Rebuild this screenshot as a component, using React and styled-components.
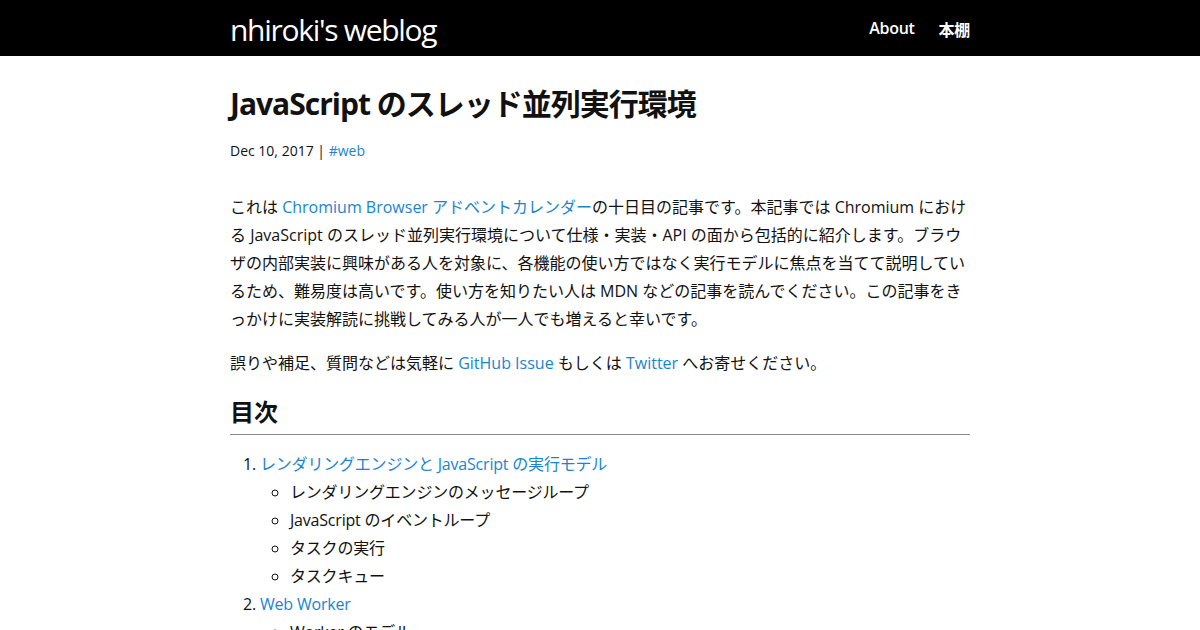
import React from "react";
import styled, { createGlobalStyle } from "styled-components";

const GlobalStyle = createGlobalStyle`
  body {
    margin: 0;
    background: #fff;
    color: #111;
    font-family: "Open Sans", "Noto Sans CJK JP", sans-serif;
  }
`;

const Header = styled.header`
  background: #000;
  height: 56px;
`;

const Wrapper = styled.div`
  width: 740px;
  margin: 0 auto;
`;

const HeaderInner = styled(Wrapper)`
  display: flex;
  align-items: center;
  justify-content: space-between;
  height: 56px;
`;

const Logo = styled.a`
  color: #fff;
  font-size: 30px;
  letter-spacing: -1.3px;
  text-decoration: none;
  margin-top: 2px;
`;

const Nav = styled.nav`
  display: flex;
  gap: 24px;
`;

const NavLink = styled.a`
  color: #fff;
  font-size: 16px;
  font-weight: 600;
  letter-spacing: -0.3px;
  text-decoration: none;
  margin-top: 2px;
`;

const Main = styled(Wrapper)`
  padding-top: 26px;
`;

const Title = styled.h1`
  margin: 0;
  font-size: 30px;
  font-weight: 700;
  letter-spacing: -1px;
  line-height: 44px;
`;

const Meta = styled.p`
  margin: 15px 0 0;
  font-size: 14px;
  line-height: 20px;
`;

const Link = styled.a`
  color: #1a84cf;
  text-decoration: none;
`;

const Paragraph = styled.p`
  margin: ${(p) => (p.$first ? "32px" : "16px")} 0 0;
  font-size: 16px;
  line-height: 28px;
`;

const Heading = styled.h2`
  margin: 15px 0 0;
  font-size: 24px;
  font-weight: 700;
  line-height: 40px;
  padding-bottom: 2px;
  border-bottom: 1px solid #888;
`;

const OrderedList = styled.ol`
  margin: 15px 0 0;
  padding-left: 30px;
  font-size: 16px;
  line-height: 28px;
  letter-spacing: -0.2px;
`;

const SubList = styled.ul`
  margin: 0;
  padding-left: 30px;
  list-style-type: circle;
`;

const toc = [
  {
    title: "レンダリングエンジンと JavaScript の実行モデル",
    items: [
      "レンダリングエンジンのメッセージループ",
      "JavaScript のイベントループ",
      "タスクの実行",
      "タスクキュー",
    ],
  },
  {
    title: "Web Worker",
    items: ["Worker のモデル", "Worker のスレッド"],
  },
];

export default function App() {
  return (
    <>
      <GlobalStyle />
      <Header>
        <HeaderInner>
          <Logo href="#">nhiroki's weblog</Logo>
          <Nav>
            <NavLink href="#">About</NavLink>
            <NavLink href="#">本棚</NavLink>
          </Nav>
        </HeaderInner>
      </Header>
      <Main>
        <Title>JavaScript のスレッド並列実行環境</Title>
        <Meta>
          Dec 10, 2017 | <Link href="#">#web</Link>
        </Meta>
        <Paragraph $first>
          これは <Link href="#">Chromium Browser アドベントカレンダー</Link>
          の十日目の記事です。本記事では Chromium における JavaScript
          のスレッド並列実行環境について仕様・実装・API
          の面から包括的に紹介します。ブラウザの内部実装に興味がある人を対象に、各機能の使い方ではなく実行モデルに焦点を当てて説明しているため、難易度は高いです。使い方を知りたい人は
          MDN
          などの記事を読んでください。この記事をきっかけに実装解読に挑戦してみる人が一人でも増えると幸いです。
        </Paragraph>
        <Paragraph>
          誤りや補足、質問などは気軽に <Link href="#">GitHub Issue</Link>{" "}
          もしくは <Link href="#">Twitter</Link> へお寄せください。
        </Paragraph>
        <Heading>目次</Heading>
        <OrderedList>
          {toc.map((section) => (
            <li key={section.title}>
              <Link href="#">{section.title}</Link>
              <SubList>
                {section.items.map((item) => (
                  <li key={item}>{item}</li>
                ))}
              </SubList>
            </li>
          ))}
        </OrderedList>
      </Main>
    </>
  );
}
